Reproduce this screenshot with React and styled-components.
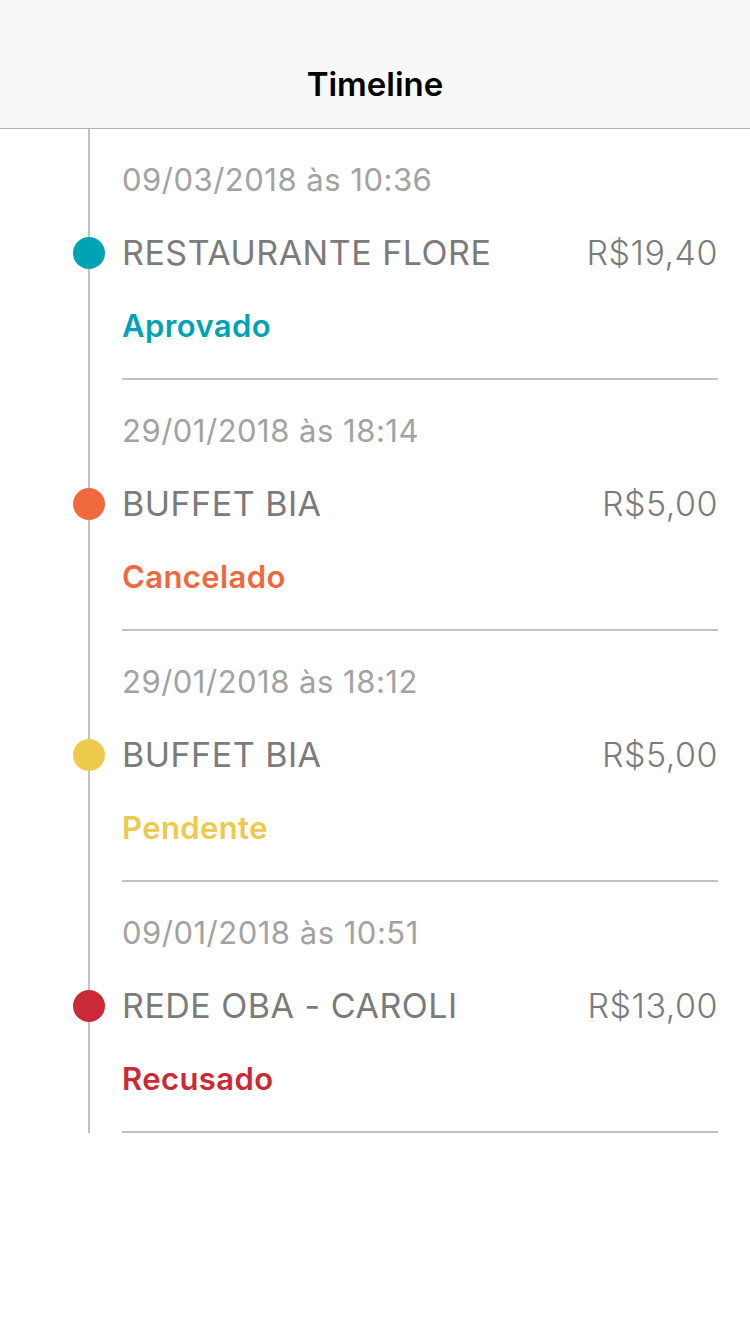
import React from "react";
import styled, { createGlobalStyle } from "styled-components";

const GlobalStyle = createGlobalStyle`
  html, body { margin: 0; padding: 0; background: #ffffff; }
  body { font-family: Inter, "Noto Sans", sans-serif; -webkit-font-smoothing: antialiased; }
`;

const Page = styled.div`
  width: 750px;
  min-height: 1334px;
  background: #ffffff;
`;

const Header = styled.header`
  height: 129px;
  background: #f8f8f8;
  border-bottom: 1px solid #b2b2b2;
  display: flex;
  align-items: flex-end;
  justify-content: center;
  padding-bottom: 24px;
  box-sizing: border-box;
`;

const Title = styled.h1`
  margin: 0;
  font-family: Inter, sans-serif;
  font-weight: 600;
  font-size: 33px;
  line-height: 40px;
  color: #000000;
`;

const List = styled.ul`
  list-style: none;
  margin: 0;
  padding: 0;
`;

const Item = styled.li`
  display: grid;
  grid-template-columns: 122px 1fr;
  grid-template-rows: 102px 44px 103px 2px;
  padding-right: 32px;
  background: linear-gradient(#c2c2c2, #c2c2c2) no-repeat 88px 0 / 2px 100%;
`;

const Dot = styled.span`
  grid-column: 1;
  grid-row: 2;
  align-self: center;
  width: 32px;
  height: 32px;
  margin-left: 73px;
  border-radius: 50%;
  background: ${(p) => p.$color};
`;

const DateText = styled.div`
  grid-column: 2;
  grid-row: 1;
  align-self: center;
  font-size: 31px;
  line-height: 36px;
  letter-spacing: 0.5px;
  color: #a2a2a2;
`;

const Row = styled.div`
  grid-column: 2;
  grid-row: 2;
  display: flex;
  justify-content: space-between;
  align-items: center;
`;

const Name = styled.span`
  font-size: 34px;
  line-height: 40px;
  letter-spacing: 0.5px;
  color: #7b7b7b;
`;

const Amount = styled.span`
  font-size: 34px;
  line-height: 40px;
  letter-spacing: 0.5px;
  font-weight: 300;
  color: #7b7b7b;
`;

const Status = styled.div`
  grid-column: 2;
  grid-row: 3;
  align-self: start;
  margin-top: 33px;
  font-size: 31px;
  line-height: 36px;
  letter-spacing: 0.4px;
  font-weight: 600;
  color: ${(p) => p.$color};
`;

const Divider = styled.div`
  grid-column: 2;
  grid-row: 4;
  background: #c2c2c2;
`;

const items = [
  { date: "09/03/2018 às 10:36", name: "RESTAURANTE FLORE", amount: "R$19,40", status: "Aprovado", color: "#00a3b4" },
  { date: "29/01/2018 às 18:14", name: "BUFFET BIA", amount: "R$5,00", status: "Cancelado", color: "#ee6a3e" },
  { date: "29/01/2018 às 18:12", name: "BUFFET BIA", amount: "R$5,00", status: "Pendente", color: "#edc94c" },
  { date: "09/01/2018 às 10:51", name: "REDE OBA - CAROLI", amount: "R$13,00", status: "Recusado", color: "#cc2936" },
];

export default function App() {
  return (
    <Page>
      <GlobalStyle />
      <Header>
        <Title>Timeline</Title>
      </Header>
      <List>
        {items.map((it, i) => (
          <Item key={i}>
            <Dot $color={it.color} />
            <DateText>{it.date}</DateText>
            <Row>
              <Name>{it.name}</Name>
              <Amount>{it.amount}</Amount>
            </Row>
            <Status $color={it.color}>{it.status}</Status>
            <Divider />
          </Item>
        ))}
      </List>
    </Page>
  );
}
